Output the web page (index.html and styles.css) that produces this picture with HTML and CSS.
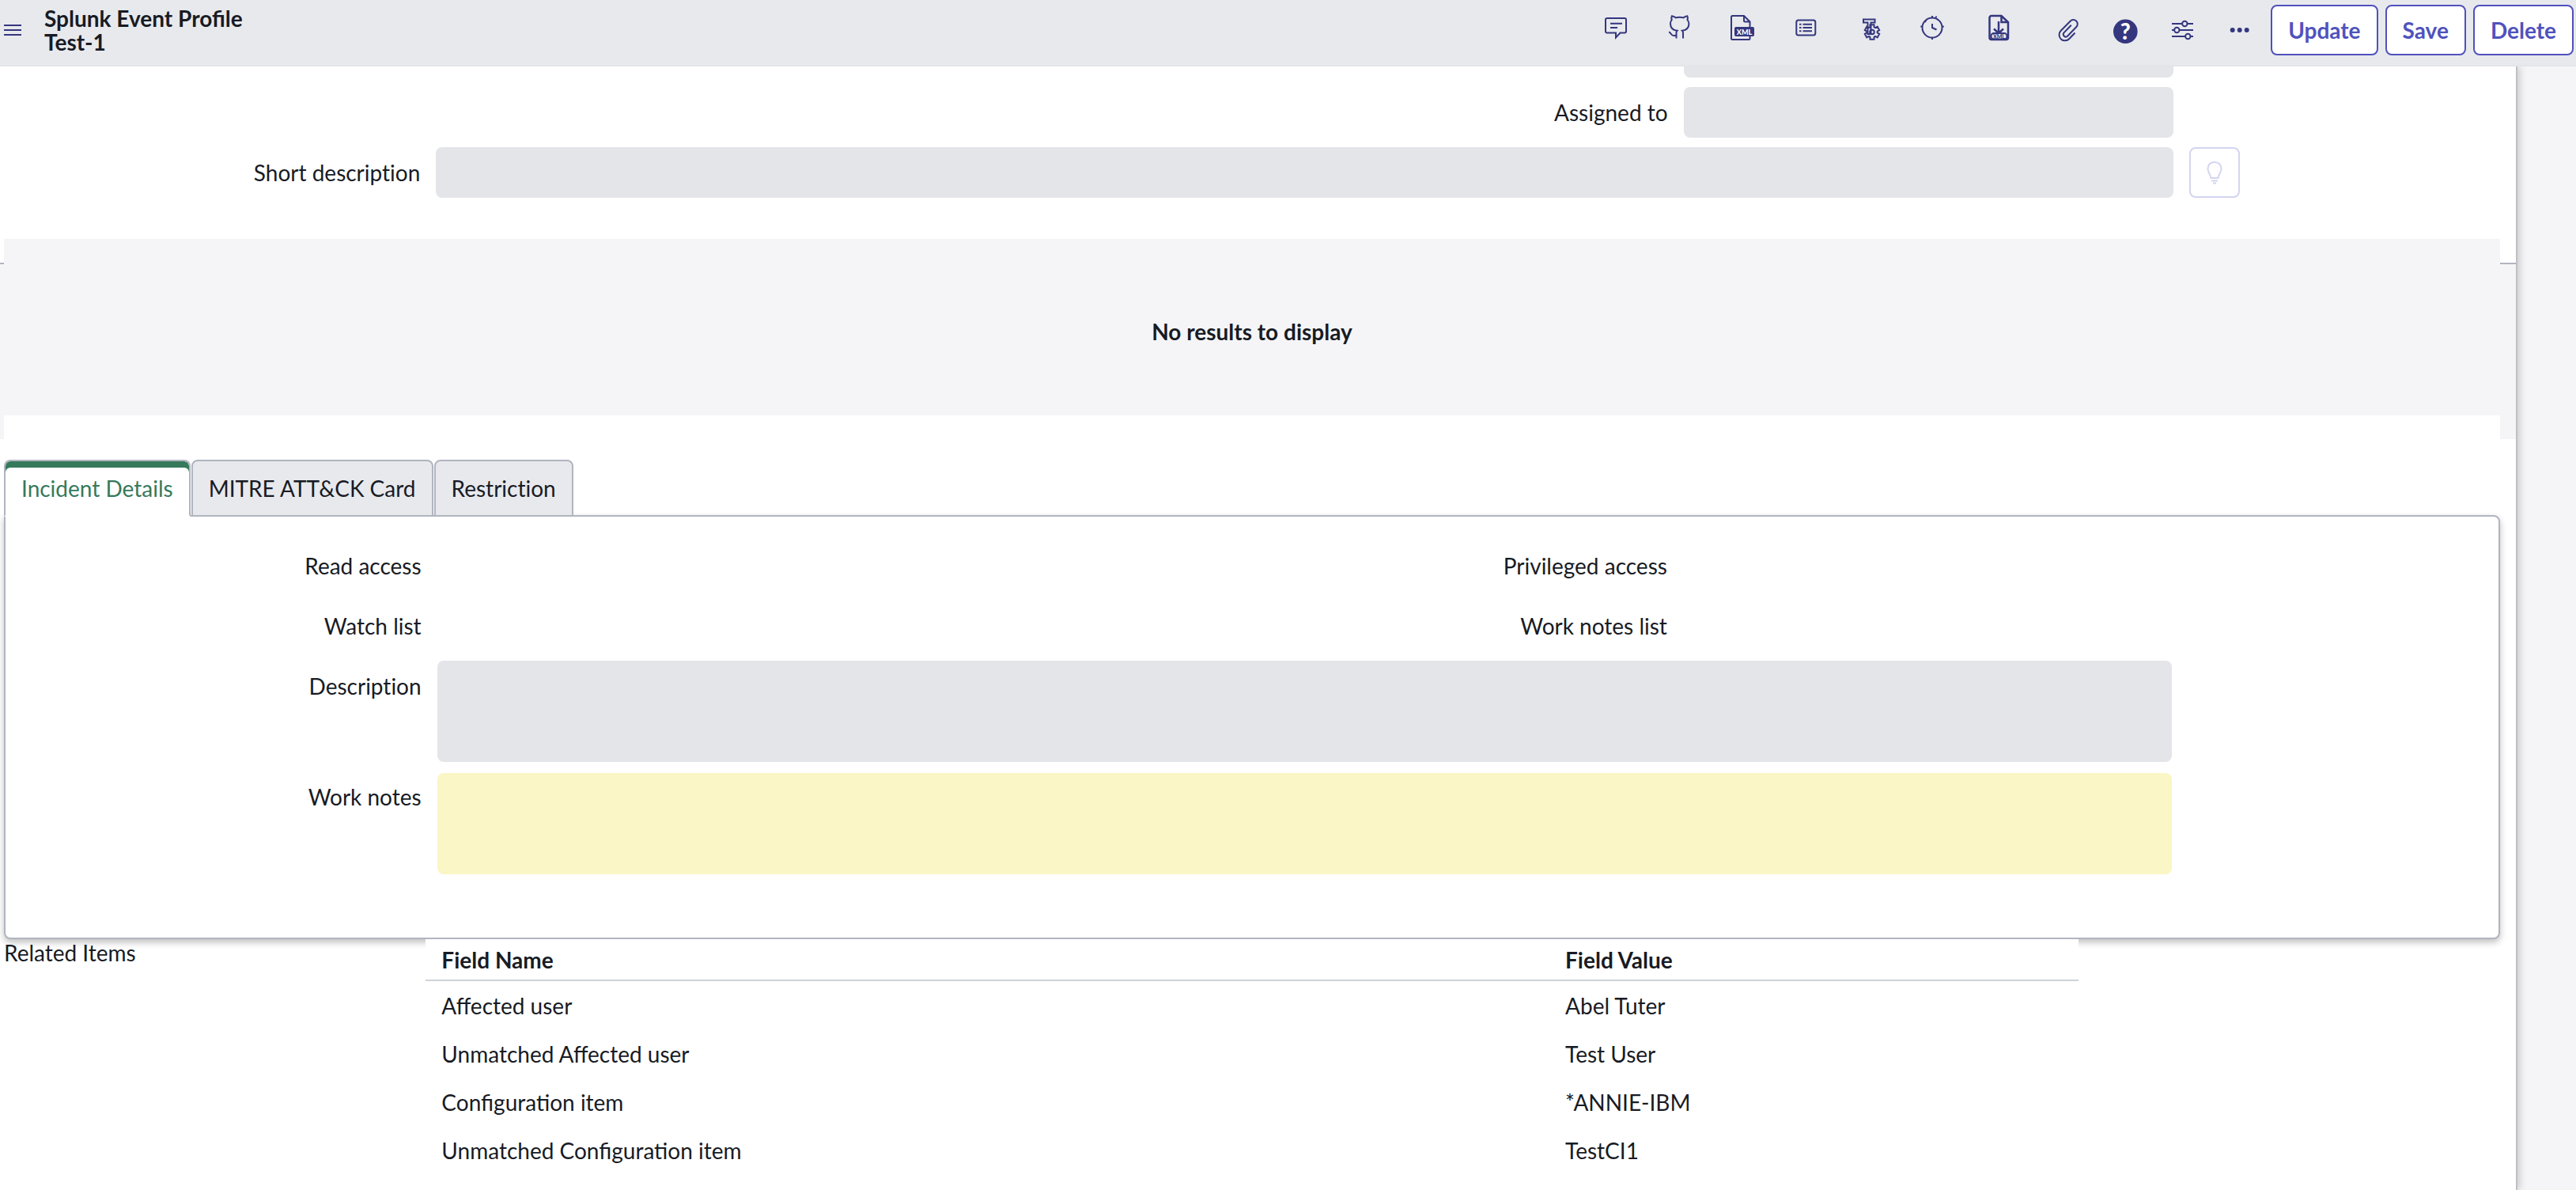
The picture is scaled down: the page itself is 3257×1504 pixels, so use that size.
FILE: index.html
```
<!DOCTYPE html>
<html lang="en">
<head>
  <meta charset="UTF-8">
  <meta name="viewport" content="width=device-width, initial-scale=1.0">
  <title>Splunk Event Profile - Test-1</title>
  <link rel="stylesheet" href="styles.css">
</head>
<body>
  <header class="navbar">
    <button class="icon-btn menu-btn" aria-label="Menu">
      <svg width="22" height="16" viewBox="0 0 22 16"><path d="M0 2h22M0 8h22M0 14h22"/></svg>
    </button>
    <h1 class="title">Splunk Event Profile<br>Test-1</h1>

    <div class="tools">
      <!-- form tools -->
      <div class="tool-group wide">
        <button class="icon-btn" aria-label="Comments">
          <svg class="icon" viewBox="0 0 32 40"><path d="M5 5h22a2 2 0 0 1 2 2v14.500a2 2 0 0 1-2 2h-5.500l-5.500 6v-6H5a2 2 0 0 1-2-2V7a2 2 0 0 1 2-2zM9 11.700h15M9 17h9"/></svg>
        </button>
        <button class="icon-btn" aria-label="Repository">
          <svg class="icon" viewBox="0 0 32 40"><path d="M12.500 30.500v-7c0-1.200.4-2.200 1-2.800C7.500 20 5 16.500 5 12c0-2 .6-3.600 1.700-5C6.200 5.300 6.200 3.700 6.800 2.300c1.900.2 3.400 1 4.900 2.100 3.200-.8 6.600-.8 9.800 0 1.500-1.100 3-1.900 4.900-2.100.6 1.400.6 3 .1 4.700 1.100 1.400 1.900 3 1.900 5 0 4.500-2.700 8-8.500 8.700.6.600 1.100 1.600 1.100 2.800v7M3 22.500c2.800.3 2.800 4.500 6 4.500h3.500"/></svg>
        </button>
        <button class="icon-btn" aria-label="XML">
          <svg class="icon" viewBox="0 0 32 40">
            <path d="M18 2H3.500A1.500 1.500 0 0 0 2 3.500v27A1.500 1.500 0 0 0 3.500 32H24a1.500 1.500 0 0 0 1.500-1.500V9.500zM18 2v6a1.500 1.500 0 0 0 1.500 1.500h6"/>
            <rect class="solid" x="6" y="16" width="25" height="12" rx="2"/>
            <text class="badge-text" x="18.500" y="25.500">XML</text>
          </svg>
        </button>
        <button class="icon-btn" aria-label="List">
          <svg class="icon" viewBox="0 0 32 40"><rect x="4.300" y="7.500" width="24" height="19" rx="2.500"/><path d="M8 12.700h2.500M8 17h2.500M8 21.300h2.500M12.500 12.700h11.500M12.500 17h11.500M12.500 21.300h11.500"/></svg>
        </button>
        <button class="icon-btn" aria-label="Template settings">
          <svg class="icon" viewBox="0 0 32 40">
            <path d="M9 6.500h14.500v4H18.500V25h-4V10.500H9z"/>
            <g transform="translate(20 22.500)">
              <path d="M-2.600 6.200L-2.500 9.200H2.500L2.600 6.200 4.100 5.400 6.700 6.800 9.200 2.400 6.700.9V-.9L9.200-2.400 6.700-6.800 4.100-5.400 2.600-6.200 2.500-9.200H-2.500L-2.600-6.200-4.100-5.400-6.700-6.800-9.200-2.400-6.700-.9V.9L-9.200 2.400-6.700 6.800-4.100 5.400z"/>
              <circle r="2.800"/>
            </g>
          </svg>
        </button>
        <button class="icon-btn" aria-label="Timer">
          <svg class="icon" viewBox="0 0 32 40"><circle cx="16" cy="17" r="12.500"/><path d="M16 12v5l5.500 2.500M1.300 15.500h2.500M28.300 15.500h2.500M16 29.500V32M16 4.500V2M20.500 4.500L21.300 2.500M6.300 10l2-2"/></svg>
        </button>
        <button class="icon-btn" aria-label="Download XML">
          <svg class="icon" viewBox="0 0 32 40">
            <path class="thick" d="M23.500 2H11a2.500 2.500 0 0 0-2.500 2.500v25A2.500 2.500 0 0 0 11 32h18.500a2.500 2.500 0 0 0 2.500-2.500V10zM23.500 2v8H32M20 9v15M14 18.500l6 5.500 6-5.500"/>
            <rect class="pill" x="10.500" y="24" width="20" height="7.500" rx="3.500"/>
            <text class="pill-text" x="20.500" y="30.500">XML</text>
          </svg>
        </button>
      </div>

      <!-- general tools -->
      <div class="tool-group">
        <button class="icon-btn" aria-label="Attachments">
          <svg class="icon" viewBox="0 0 32 40"><path d="M24.500 23.500L17.300 31A7 7 0 0 1 6.500 21L18.600 8.700A5.200 5.200 0 0 1 26.300 16L15 27.800A3.200 3.200 0 0 1 10.300 23.600L19.800 13.800"/></svg>
        </button>
        <button class="icon-btn" aria-label="Help">
          <svg class="icon" viewBox="0 0 32 40"><circle class="solid" cx="16.300" cy="21.700" r="15.300"/><text class="help-text" x="16.300" y="31.500">?</text></svg>
        </button>
        <button class="icon-btn" aria-label="Settings">
          <svg class="icon" viewBox="0 0 32 40"><path d="M3 12h27M3 20h27M3 28h27"/><circle class="knob" cx="19.300" cy="12" r="3.200"/><circle class="knob" cx="9.300" cy="20" r="3.200"/><circle class="knob" cx="23.300" cy="28" r="3.200"/></svg>
        </button>
        <button class="icon-btn" aria-label="More options">
          <svg class="icon" viewBox="0 0 32 40"><circle class="dot" cx="7.700" cy="20" r="3"/><circle class="dot" cx="16.700" cy="20" r="3"/><circle class="dot" cx="25.700" cy="20" r="3"/></svg>
        </button>
      </div>
    </div>

    <div class="actions">
      <button class="btn">Update</button>
      <button class="btn">Save</button>
      <button class="btn">Delete</button>
    </div>
  </header>

  <main class="page">
    <form class="form top-form">
      <input class="field right" type="text" aria-label="Assignment group" readonly>
      <label class="label-right" for="assignedTo">Assigned to</label>
      <input class="field right" type="text" id="assignedTo" readonly>
      <label class="label-left" for="shortDesc">Short description</label>
      <input class="field full" type="text" id="shortDesc" readonly>
      <button class="bulb-btn" type="button" aria-label="Suggestions" disabled>
        <svg width="20" height="30" viewBox="0 0 20 30"><path d="M10 2a8 8 0 0 0-8.500 8.500C1.500 15 5 17 5.500 22h9c.5-5 4-7 4-11.500A8 8 0 0 0 10 2zM6 25.500h8M8 28.500h4"/></svg>
      </button>
    </form>

    <section class="results">
      <p class="no-results">No results to display</p>
    </section>

    <section class="details">
      <div class="tabs" role="tablist">
        <button class="tab active" role="tab" aria-selected="true">Incident Details</button>
        <button class="tab" role="tab">MITRE ATT&amp;CK Card</button>
        <button class="tab" role="tab">Restriction</button>
      </div>
      <form class="form panel">
        <label class="label-left" for="readAccess">Read access</label>
        <div class="value-row">
          <output id="readAccess"></output>
          <label for="privAccess">Privileged access</label>
        </div>
        <output class="right" id="privAccess"></output>
        <label class="label-left" for="watchList">Watch list</label>
        <div class="value-row">
          <output id="watchList"></output>
          <label for="workNotesList">Work notes list</label>
        </div>
        <output class="right" id="workNotesList"></output>
        <label class="label-left" for="description">Description</label>
        <textarea class="field full area" id="description" readonly></textarea>
        <label class="label-left" for="workNotes">Work notes</label>
        <textarea class="field full area notes" id="workNotes"></textarea>
      </form>
    </section>

    <section class="related">
      <h2 class="related-title">Related Items</h2>
      <table class="related-table">
        <thead>
          <tr>
            <th>Field Name</th>
            <th>Field Value</th>
          </tr>
        </thead>
        <tbody>
          <tr><td>Affected user</td><td>Abel Tuter</td></tr>
          <tr><td>Unmatched Affected user</td><td>Test User</td></tr>
          <tr><td>Configuration item</td><td>*ANNIE-IBM</td></tr>
          <tr><td>Unmatched Configuration item</td><td>TestCI1</td></tr>
        </tbody>
      </table>
    </section>
  </main>
</body>
</html>
```
FILE: styles.css
```
* {
  box-sizing: border-box;
}

body {
  margin: 0;
  min-height: 100vh;
  display: flex;
  flex-direction: column;
  background-color: #f5f5f8;
  color: #181b24;
  font-family: Lato, sans-serif;
  font-size: 28px;
}

button, input, textarea {
  font: inherit;
}

/* header */
.navbar {
  position: relative;
  z-index: 1;
  display: flex;
  align-items: center;
  padding: 6px 3px 12px 5px;
  background-color: #e8e9ed;
  border-bottom: 2px solid #e4e5e9;
}

.title {
  margin: 0 auto 0 29px;
  font-size: 28px;
  line-height: 30px;
}

.icon-btn {
  display: flex;
  padding: 0;
  border: none;
  background: none;
}

.icon-btn svg {
  overflow: visible;
  fill: none;
  stroke: #34367e;
  stroke-width: 2;
}

.icon {
  width: 32px;
  height: 40px;
}

.tools {
  display: flex;
  gap: 60px;
  margin-right: 24px;
}

.tool-group {
  display: flex;
  gap: 40px;
}

.tool-group.wide {
  gap: 48px;
}

.icon .solid, .icon .dot {
  fill: #34367e;
  stroke: none;
}

.icon .thick {
  stroke-width: 2.5;
}

.icon .knob, .icon .pill {
  fill: #e8e9ed;
}

.icon text {
  fill: #fff;
  stroke: none;
  text-anchor: middle;
  font-weight: 900;
}

.icon .badge-text {
  font-size: 9px;
}

.icon .pill-text {
  fill: #34367e;
  font-size: 7px;
}

.icon .help-text {
  font-size: 28px;
}

.actions {
  display: flex;
  gap: 9px;
}

.btn {
  height: 64px;
  padding: 0 20px;
  border: 2px solid #4f52bd;
  border-radius: 8px;
  background-color: #fff;
  color: #4f52bd;
  font-weight: bold;
}

/* page */
.page {
  flex: 1;
  margin-right: 74px;
  overflow: hidden;
  background-color: #fff;
  border-right: 2px solid #bfc0c5;
  box-shadow: 2px 0 10px rgba(0, 0, 0, 0.2);
}

.form {
  display: grid;
  grid-template-columns: 170fr 503fr 200fr 127fr;
  gap: 12px 20px;
}

/* scrolled under the header */
.top-form {
  margin: -50px 20px 82px 5px;
}

.form label, .tab {
  font-variant-ligatures: none;
}

.label-left, .label-right {
  text-align: right;
  line-height: 64px;
}

.label-left {
  grid-column: 1;
}

.label-right {
  grid-column: 2;
}

.field {
  width: 100%;
  height: 64px;
  padding: 0 16px;
  border: none;
  border-radius: 8px;
  background-color: #e4e5e9;
}

.right {
  grid-column: 3;
}

.full {
  grid-column: 2 / 4;
}

.value-row {
  display: flex;
  justify-content: space-between;
  line-height: 64px;
}

.bulb-btn {
  display: flex;
  align-items: center;
  justify-content: center;
  width: 64px;
  height: 64px;
  padding: 0;
  border: 2px solid #d3d5f0;
  border-radius: 8px;
  background-color: #fff;
}

.bulb-btn svg {
  fill: none;
  stroke: #d3d5f0;
  stroke-width: 2;
}

/* results */
.results {
  padding: 0 20px 0 5px;
  border-top: 2px solid #b0b5be;
  background-color: #f5f5f8;
}

.no-results {
  margin: -32px 0 0;
  padding: 100px 0 89px;
  border-bottom: 30px solid #fff;
  background-color: #f5f5f8;
  line-height: 34px;
  text-align: center;
  font-weight: bold;
}

/* tabs */
.details {
  padding: 26px 20px 0 5px;
}

.tabs {
  position: relative;
  display: flex;
  gap: 1px;
  margin-bottom: -2px;
}

.tab {
  height: 72px;
  padding: 0 20px;
  border: 2px solid #b0b5bf;
  border-radius: 8px 8px 0 0;
  background-color: #e8e9ed;
  color: #181b24;
}

.tab.active {
  border-bottom-color: #fff;
  background-color: #fff;
  box-shadow: inset 0 8px #357a5b;
  color: #357a5b;
}

.panel {
  padding: 30px 0 80px;
  border: 2px solid #b0b5bf;
  border-radius: 0 8px 8px 8px;
  background-color: #fff;
  box-shadow: 0 4px 8px rgba(0, 0, 0, 0.25);
}

.area {
  display: block;
  height: 128px;
  padding: 16px;
  resize: none;
}

.notes {
  margin-top: 2px;
  background-color: #faf6c5;
}

/* related items */
.related {
  position: relative;
  display: flex;
  align-items: flex-start;
  padding: 0 20px 0 5px;
}

.related-title {
  width: 16.9%;
  margin: 0;
  font-size: 28px;
  font-weight: normal;
  line-height: 34px;
}

.related-table {
  width: 66.2%;
  border-spacing: 0;
  background-color: #fff;
}

.related-table th, .related-table td {
  height: 61px;
  padding: 0 20px;
  text-align: left;
}

.related-table th {
  width: 68%;
  height: 53px;
  border-bottom: 2px solid #d0d2d8;
}

.related-table th + th {
  width: 32%;
}
```
